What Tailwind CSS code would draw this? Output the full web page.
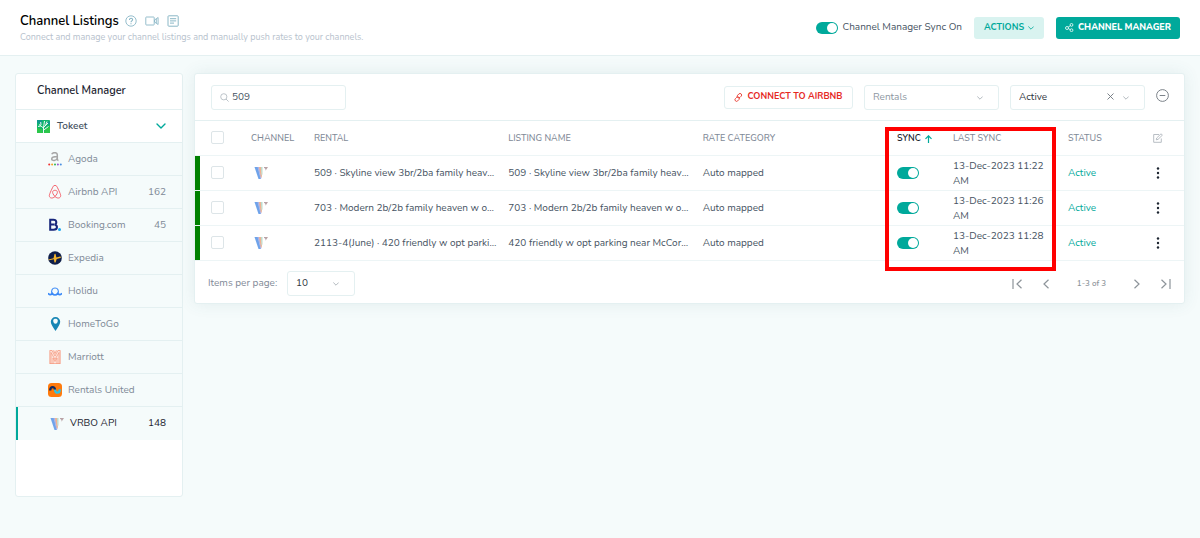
<!DOCTYPE html>
<html lang="en">
<head>
<meta charset="utf-8">
<meta name="viewport" content="width=device-width, initial-scale=1">
<title>Channel Listings</title>
<script src="https://cdn.jsdelivr.net/npm/@tailwindcss/browser@4"></script>
</head>
<body class="min-h-screen bg-[#f5fbfb] font-['Nunito','Open_Sans',sans-serif] text-[10px] text-[#465362]">

<svg class="hidden" aria-hidden="true">
  <symbol id="vrbo" viewBox="0 0 14 14">
    <path d="M0.500 1h3.500l3 12H4.500z" fill="#6ea3ea"/>
    <path d="M3.500 1h2l2 11-1 1z" fill="#a9b3e8"/>
    <path d="M5 1h2l1 9-1 2z" fill="#f3b08e"/>
    <path d="M6.800 1h1.700v7l-.8 2z" fill="#b9dccd"/>
    <path d="M10 1h4L11.500 4.800c.3-1.600-.2-2.500-1.500-2.800z" fill="#b9a3a6"/>
  </symbol>
  <symbol id="chev" viewBox="0 0 10 6"><path d="M1 1l4 4 4-4" fill="none" stroke="currentColor" stroke-width="1.400" stroke-linecap="round" stroke-linejoin="round"/></symbol>
  <symbol id="dots" viewBox="0 0 4 12"><circle cx="2" cy="1.500" r="1.200"/><circle cx="2" cy="6" r="1.200"/><circle cx="2" cy="10.500" r="1.200"/></symbol>
</svg>

<header class="flex h-14 items-center justify-between border-b border-[#e4f0f1] bg-white pr-5 pl-5">
  <div class="flex flex-col">
    <div class="flex items-center gap-2">
      <h1 class="mr-[-2px] text-[13px] leading-4 font-semibold text-black">Channel Listings</h1>
      <a href="#help" aria-label="Help" class="text-[#8ab7c6]"><svg class="size-3" viewBox="0 0 12 12" fill="none" stroke="currentColor"><circle cx="6" cy="6" r="5.200" stroke-width=".9"/><path d="M4.500 4.900c0-2.200 3.200-2 3.100-.1C7.500 5.900 6 5.900 6 7.200M6 8.200v1" stroke-width="1.100"/></svg></a>
      <a href="#video" aria-label="Video" class="text-[#8ab7c6]"><svg class="h-3 w-[14px]" viewBox="0 0 14 12" fill="none" stroke="currentColor" stroke-width=".9"><rect x=".8" y="2" width="8.400" height="8" rx=".6"/><path d="M9.500 5l3.600-2.500v7L9.500 7z M11.300 4v4" stroke-linejoin="round"/></svg></a>
      <a href="#docs" aria-label="Documentation" class="text-[#8ab7c6]"><svg class="size-3" viewBox="0 0 12 12" fill="none" stroke="currentColor"><rect x="1" y=".8" width="10.200" height="10.400" rx=".8"/><path d="M3 3.700h6.200M3 5.900h6.200M3 8.100h4"/></svg></a>
    </div>
    <p class="mt-0.5 text-[9px] leading-3 text-[#b7c2cd]">Connect and manage your channel listings and manually push rates to your channels.</p>
  </div>
  <div class="flex items-center gap-3">
    <label class="flex items-center gap-1 text-[10px]">
      <input type="checkbox" role="switch" checked class="flex h-3 w-[22px] shrink-0 appearance-none items-center justify-end rounded-full bg-[#00a99b] px-px before:size-2.5 before:rounded-full before:bg-white">
      Channel Manager Sync On
    </label>
    <button class="flex h-[22px] w-[70px] items-center justify-center gap-1 rounded-[3px] bg-[#d9f3f0] text-[9px] font-bold text-[#00a99b]">ACTIONS<svg class="h-1 w-1.5"><use href="#chev"/></svg></button>
    <button class="flex h-[22px] w-[124px] items-center justify-center gap-1 rounded-[3px] bg-[#00a99b] text-[9px] font-extrabold text-white"><svg class="size-[9px] shrink-0" viewBox="0 0 9 9" fill="none" stroke="currentColor" stroke-width=".8"><circle cx="2" cy="5" r="1.500"/><circle cx="6.500" cy="1.900" r="1.400"/><circle cx="6.500" cy="7.200" r="1.400"/><path d="M3.200 4.100l2.200-1.400M3.300 5.600l2 1"/></svg>CHANNEL MANAGER</button>
  </div>
</header>

<main class="flex items-start gap-[11px] px-[15px] pt-[17px]">
  <aside class="w-[168px] shrink-0 rounded-[3px] border border-[#e4f0f1] bg-white pb-14">
    <h2 class="flex h-9 items-center border-b border-[#e4f0f1] pl-[21px] text-[11px] font-semibold text-[#1c2430]">Channel Manager</h2>
    <button class="flex h-[33px] w-full items-center border-b border-[#e4f0f1] pr-4 pl-[21px] font-semibold">
      <svg class="mr-[7px] size-[13px]" viewBox="0 0 13 13"><rect width="13" height="13" rx=".7" fill="#10b56d"/><path d="M0 8l5 1 1 4H0zM8 9l5-3v7H7z" fill="#2cc74b"/><path d="M0 0h5v4L0 3zM8 3l5-2v4z" fill="#109a8d"/><path d="M6.500 13V8L2 4.500M6.500 8L7.500 1M6.500 7.500L11 3M7 9.800l4.500-3.300M3.800 6L1 6.500M8.500 5.500L10 1.500M4 5L3.700 2" stroke="#fff" fill="none" stroke-width=".9"/></svg>
      Tokeet
      <svg class="ml-auto h-1.5 w-2.5 text-[#00a99b]"><use href="#chev"/></svg>
    </button>
    <nav class="bg-[#f5fbfb] text-[10px] text-[#7f8a97]">
      <a href="#agoda" class="flex h-[33px] items-center border-b border-[#e4f0f1] pr-4 pl-8"><svg class="mr-1.5 size-[14px]" viewBox="0 0 14 14"><path d="M3.800 2.300C4.500.2 9.300-.2 9.300 2.800v4c0 1 .4 1.600 1.200 1.700M9.300 4.500C6 4.500 3.700 4.800 3.700 6.900c0 2.400 5 2 5.600-.8" fill="none" stroke="#a6a6a6" stroke-width="1.500"/><circle cx="1.200" cy="12.500" r="1" fill="#e33"/><circle cx="4.100" cy="12.500" r="1" fill="#f5a623"/><circle cx="7" cy="12.500" r="1" fill="#35b558"/><circle cx="9.900" cy="12.500" r="1" fill="#a05ad0"/><circle cx="12.800" cy="12.500" r="1" fill="#4a90e2"/></svg>Agoda</a>
      <a href="#airbnb" class="flex h-[33px] items-center border-b border-[#e4f0f1] pr-4 pl-8"><svg class="mr-1.5 size-[14px]" viewBox="0 0 14 14" fill="none" stroke="#f4636d" stroke-width="1"><path d="M7 11.500C3 7.200 4.700 5.300 7 5.300s4 1.900 0 6.200c-2.200 2.300-5.700 2-5.700-1C1.300 9.200 4.800 1.900 5.300 1.200c.7-1 2.700-1 3.400 0 .5.700 4 8 4 9.300 0 3-3.500 3.300-5.700 1z"/></svg>Airbnb API<span class="ml-auto">162</span></a>
      <a href="#booking" class="flex h-[33px] items-center border-b border-[#e4f0f1] pr-4 pl-8"><svg class="mr-1.5 size-[14px]" viewBox="0 0 14 14"><path d="M2.200 1.800v10h3.300c4.600 0 4.200-4.700 1.200-5.100 2.300-.7 2.300-4.900-1.200-4.900zM2.200 6.600h4" fill="none" stroke="#17267b" stroke-width="2"/><circle cx="11.500" cy="11.500" r="1.500" fill="#18a5ef"/></svg>Booking.com<span class="ml-auto">45</span></a>
      <a href="#expedia" class="flex h-[33px] items-center border-b border-[#e4f0f1] pr-4 pl-8"><svg class="mr-1.5 size-[14px]" viewBox="0 0 14 14"><circle cx="7" cy="7" r="6.800" fill="#101f4a"/><path d="M.5 8.400l5-1.200L6.500 3l1-.2.900 3.700 3.600-.9 1.300.5-1 1-3.600.8-1.200 3.600H6.500l-.6-3.200-5 .9z" fill="#f5b52c"/></svg>Expedia</a>
      <a href="#holidu" class="flex h-[33px] items-center border-b border-[#e4f0f1] pr-4 pl-8"><svg class="mr-1.5 size-[14px]" viewBox="0 0 14 14" fill="none" stroke="#3b8af7" stroke-width="1.100"><path d="M4.300 9.700C2.700 6.500 4.200 4 7 4s4.300 2.500 2.700 5.700"/><path d="M0 9.300c1.500 2 2.800 1.500 4.300.2 1.500 2 3.900 2 5.400 0 1.500 1.300 2.800 1.800 4.300-.2" stroke-width="1.700"/></svg>Holidu</a>
      <a href="#hometogo" class="flex h-[33px] items-center border-b border-[#e4f0f1] pr-4 pl-8"><svg class="mr-1.5 size-[14px]" viewBox="0 0 14 14"><path fill-rule="evenodd" d="M7.500 14C4.500 9.500 2.800 7 2.800 4.700a4.700 4.700 0 019.400 0C12.200 7 10.500 9.500 7.500 14zM5.200 3.500C5.200 5 6 6.800 7.500 6.800S9.800 5 9.800 3.500C9.800 1.300 5.200 1.300 5.200 3.500z" fill="#1786b5"/></svg>HomeToGo</a>
      <a href="#marriott" class="flex h-[33px] items-center border-b border-[#e4f0f1] pr-4 pl-8"><svg class="mr-1.5 size-[14px]" viewBox="0 0 14 14"><path d="M1.500 0h11v14h-11z" fill="#fde3db"/><path d="M3 14V2.500l4 7 4-7V14M5 14V8l2 3.500L9 8v6M1.800 14V.5H4l3 5.500L10 .5h2.200V14M5.500.5L7 3.500 8.500.5M2 13.600h10" fill="none" stroke="#f4896d" stroke-width=".6"/></svg>Marriott</a>
      <a href="#rentals-united" class="flex h-[33px] items-center border-b border-[#e4f0f1] pr-4 pl-8"><svg class="mr-1.5 size-[14px]" viewBox="0 0 14 14"><rect width="14" height="14" rx="3.500" fill="#ff7a0c"/><path d="M2.200 7.500C2.200 3 7 3 7 7" fill="none" stroke="#14295c" stroke-width="2.300"/><path d="M7 6.500c0 4.300 4.800 4.300 4.800-.2" fill="none" stroke="#2cc3e8" stroke-width="2.300"/></svg>Rentals United</a>
      <a href="#vrbo-api" aria-current="page" class="flex h-[33px] items-center border-l-2 border-[#00a99b] pr-4 pl-8 text-[#1c2430]"><svg class="mr-1.5 size-[14px]"><use href="#vrbo"/></svg>VRBO API<span class="ml-auto">148</span></a>
    </nav>
  </aside>

  <section class="relative min-w-0 flex-1 rounded-[3px] border border-[#e4f0f1] bg-white shadow-[0_0_16px_rgba(60,110,120,0.10)]">
    <div class="flex h-[47px] items-center border-b border-[#e4f0f1] pr-[15px] pl-4">
      <label class="flex h-[25px] w-[135px] items-center gap-[3px] rounded-[3px] border border-[#e4f0f1] pl-2">
        <svg class="size-[9px] shrink-0 text-[#b5bdc4]" viewBox="0 0 9 9" fill="none" stroke="currentColor" stroke-width=".9"><circle cx="3.800" cy="3.800" r="3.100"/><path d="M6 6l2.600 2.600"/></svg>
        <input type="text" value="509" aria-label="Search listings" class="w-full min-w-0 outline-none">
      </label>
      <div class="ml-auto flex items-center">
        <button class="flex h-[23px] w-[129px] items-center justify-center gap-1 rounded-[3px] border border-[#e4f0f1] text-[9px] font-bold text-[#e6291f]"><svg class="size-[9px] shrink-0" viewBox="0 0 9 9" fill="none" stroke="currentColor" stroke-width=".8"><rect x="3.800" y=".2" width="3.200" height="5" rx="1.600" transform="rotate(45 5.400 2.700)"/><rect x="1.600" y="3.600" width="3.200" height="5" rx="1.600" transform="rotate(45 3.200 6.100)"/></svg>CONNECT TO AIRBNB</button>
        <div class="relative ml-[11px]">
          <select aria-label="Rentals" class="block h-[25px] w-[135px] appearance-none rounded-[3px] border border-[#e4f0f1] bg-white pl-2 text-[#8d97a2]"><option>Rentals</option></select>
          <svg class="pointer-events-none absolute top-[11px] right-4 h-1 w-1.5 text-[#a3abb3]"><use href="#chev"/></svg>
        </div>
        <div class="relative ml-[11px]">
          <select aria-label="Status" class="block h-[25px] w-[135px] appearance-none rounded-[3px] border border-[#e4f0f1] bg-white pl-2 text-[#2f3640]"><option>Active</option></select>
          <button aria-label="Clear status" class="absolute top-2 right-[31px] text-[#6d757d]"><svg class="size-[7px]" viewBox="0 0 7 7" stroke="currentColor" stroke-width=".9"><path d="M.5.5l6 6M6.500.5l-6 6"/></svg></button>
          <svg class="pointer-events-none absolute top-[11px] right-4 h-1 w-1.5 text-[#a3abb3]"><use href="#chev"/></svg>
        </div>
        <button aria-label="Remove filters" class="mb-1 ml-[11px] text-[#6d757d]"><svg class="size-[13px]" viewBox="0 0 13 13" fill="none" stroke="currentColor" stroke-width=".9"><circle cx="6.500" cy="6.500" r="5.900"/><path d="M3.700 6.500h5.600"/></svg></button>
      </div>
    </div>

    <table class="w-full table-fixed border-collapse text-left">
      <colgroup><col class="w-14"><col class="w-[63px]"><col><col><col><col class="w-14"><col class="w-[115px]"><col class="w-[85px]"><col class="w-[31px]"></colgroup>
      <thead class="text-[9px] text-[#7f8a97]">
        <tr class="h-[34px]">
          <th class="pl-4"><input type="checkbox" aria-label="Select all" class="block size-[13px] appearance-none rounded-[2px] border border-[#dde5e8] bg-white"></th>
          <th class="pt-0.5 font-medium">CHANNEL</th><th class="pt-0.5 font-medium">RENTAL</th><th class="pt-0.5 font-medium">LISTING NAME</th><th class="pt-0.5 font-medium">RATE CATEGORY</th>
          <th class="pt-0.5 font-semibold text-[#1c2430]"><button class="flex items-center gap-1">SYNC<svg class="h-2 w-[7px] text-[#00a99b]" viewBox="0 0 7 8" fill="none" stroke="currentColor" stroke-width="1.200"><path d="M3.500 8V1M.5 3.800l3-3 3 3"/></svg></button></th>
          <th class="pt-0.5 font-medium">LAST SYNC</th><th class="pt-0.5 font-medium">STATUS</th>
          <th><button aria-label="Edit columns" class="block text-[#b0b7bd]"><svg class="size-2.5" viewBox="0 0 10 10" fill="none" stroke="currentColor" stroke-width=".9"><path d="M6 1.500H.7v7.800h7.600V5.500M3.300 6.800l.4-1.800L8 .8l1.400 1.300L5 6.400z"/></svg></button></th>
        </tr>
      </thead>
      <tbody>
        <tr class="h-[35px] border-t border-[#edf5f6]">
          <td class="p-0"><div class="flex h-[34px] items-center border-l-5 border-[#008000] pl-[11px]"><input type="checkbox" aria-label="Select 509" class="block size-[13px] appearance-none rounded-[2px] border border-[#dde5e8] bg-white"></div></td>
          <td><svg class="ml-[3px] size-[14px]"><use href="#vrbo"/></svg></td>
          <td class="truncate pt-0.5 pr-3">509 · Skyline view 3br/2ba family heaven</td>
          <td class="truncate pt-0.5 pr-3">509 · Skyline view 3br/2ba family heaven</td>
          <td class="pt-0.5">Auto mapped</td>
          <td><input type="checkbox" role="switch" checked aria-label="Sync 509" class="flex h-3 w-[22px] appearance-none items-center justify-end rounded-full bg-[#00a99b] px-px before:size-2.5 before:rounded-full before:bg-white"></td>
          <td class="pt-0.5 pr-5 leading-[15px]">13-Dec-2023 11:22 AM</td><td class="pt-0.5 text-[#00a99b]">Active</td>
          <td><button aria-label="Row actions" class="ml-[3px] block"><svg class="h-3 w-1 fill-[#1c2430]"><use href="#dots"/></svg></button></td>
        </tr>
        <tr class="h-[35px] border-t border-[#edf5f6]">
          <td class="p-0"><div class="flex h-[34px] items-center border-l-5 border-[#008000] pl-[11px]"><input type="checkbox" aria-label="Select 703" class="block size-[13px] appearance-none rounded-[2px] border border-[#dde5e8] bg-white"></div></td>
          <td><svg class="ml-[3px] size-[14px]"><use href="#vrbo"/></svg></td>
          <td class="truncate pt-0.5 pr-3">703 · Modern 2b/2b family heaven w opt</td>
          <td class="truncate pt-0.5 pr-3">703 · Modern 2b/2b family heaven w opt</td>
          <td class="pt-0.5">Auto mapped</td>
          <td><input type="checkbox" role="switch" checked aria-label="Sync 703" class="flex h-3 w-[22px] appearance-none items-center justify-end rounded-full bg-[#00a99b] px-px before:size-2.5 before:rounded-full before:bg-white"></td>
          <td class="pt-0.5 pr-5 leading-[15px]">13-Dec-2023 11:26 AM</td><td class="pt-0.5 text-[#00a99b]">Active</td>
          <td><button aria-label="Row actions" class="ml-[3px] block"><svg class="h-3 w-1 fill-[#1c2430]"><use href="#dots"/></svg></button></td>
        </tr>
        <tr class="h-[35px] border-y border-[#edf5f6]">
          <td class="p-0"><div class="flex h-[34px] items-center border-l-5 border-[#008000] pl-[11px]"><input type="checkbox" aria-label="Select 2113-4" class="block size-[13px] appearance-none rounded-[2px] border border-[#dde5e8] bg-white"></div></td>
          <td><svg class="ml-[3px] size-[14px]"><use href="#vrbo"/></svg></td>
          <td class="truncate pt-0.5 pr-3">2113-4(June) · 420 friendly w opt parking</td>
          <td class="truncate pt-0.5 pr-3">420 friendly w opt parking near McCormick</td>
          <td class="pt-0.5">Auto mapped</td>
          <td><input type="checkbox" role="switch" checked aria-label="Sync 2113-4" class="flex h-3 w-[22px] appearance-none items-center justify-end rounded-full bg-[#00a99b] px-px before:size-2.5 before:rounded-full before:bg-white"></td>
          <td class="pt-0.5 pr-5 leading-[15px]">13-Dec-2023 11:28 AM</td><td class="pt-0.5 text-[#00a99b]">Active</td>
          <td><button aria-label="Row actions" class="ml-[3px] block"><svg class="h-3 w-1 fill-[#1c2430]"><use href="#dots"/></svg></button></td>
        </tr>
      </tbody>
    </table>

    <footer class="flex h-[42px] items-center pt-1 pr-[13px] pl-[13px] text-[#7f8a97]">
      <label for="pp" class="w-[79px]">Items per page:</label>
      <div class="relative">
        <select id="pp" class="block h-[25px] w-[68px] appearance-none rounded-[3px] border border-[#e4f0f1] bg-white pl-2 text-[#2f3640]"><option>10</option></select>
        <svg class="pointer-events-none absolute top-[11px] right-4 h-1 w-1.5 text-[#a3abb3]"><use href="#chev"/></svg>
      </div>
      <div class="ml-auto flex items-center text-[#8d949a]">
        <button aria-label="First page"><svg class="h-2.5 w-[11px]" viewBox="0 0 11 10" fill="none" stroke="currentColor" stroke-width="1.200"><path d="M1 0v10M9.500.8L5 5l4.500 4.200"/></svg></button>
        <button aria-label="Previous page" class="ml-5"><svg class="h-2.5 w-1.5" viewBox="0 0 6 10" fill="none" stroke="currentColor" stroke-width="1.200"><path d="M5.500.8L1 5l4.500 4.200"/></svg></button>
        <span class="w-[85px] text-center text-[8px] font-semibold">1-3 of 3</span>
        <button aria-label="Next page"><svg class="h-2.5 w-1.5" viewBox="0 0 6 10" fill="none" stroke="currentColor" stroke-width="1.200"><path d="M.5.8L5 5 .5 9.200"/></svg></button>
        <button aria-label="Last page" class="ml-5"><svg class="h-2.5 w-[11px]" viewBox="0 0 11 10" fill="none" stroke="currentColor" stroke-width="1.200"><path d="M10 0v10M1.500.8L6 5 1.500 9.200"/></svg></button>
      </div>
    </footer>

    <div class="pointer-events-none absolute top-[53px] right-32 h-36 w-[171px] border-4 border-[#ff0000]"></div>
  </section>
</main>
</body>
</html>
